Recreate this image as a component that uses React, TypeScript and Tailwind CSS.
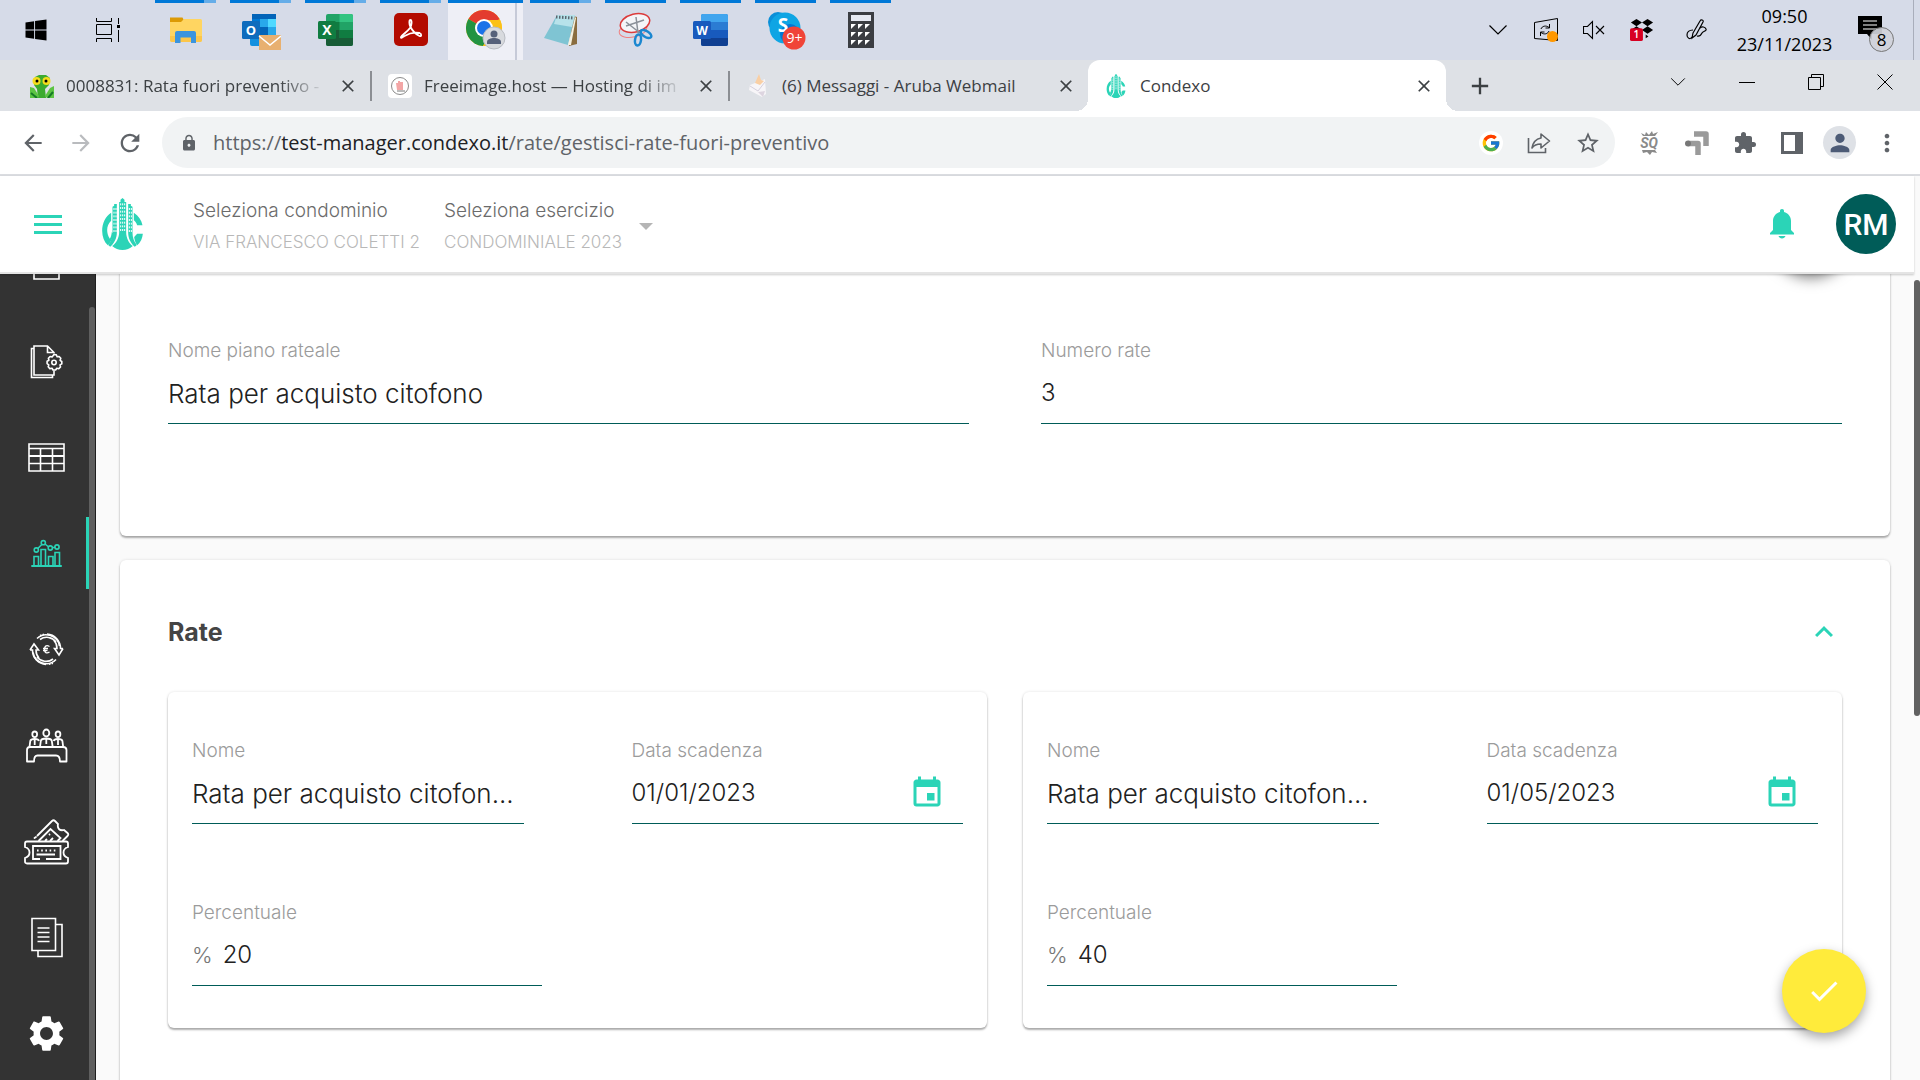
import React, { useId } from 'react'
import { FaWindows } from 'react-icons/fa'
import { FcGoogle } from 'react-icons/fc'
import {
  MdAdd,
  MdArrowBack,
  MdArrowForward,
  MdCheck,
  MdClose,
  MdEvent,
  MdExtension,
  MdKeyboardArrowUp,
  MdLock,
  MdMoreVert,
  MdPerson,
  MdRefresh,
  MdSettings,
  MdStarBorder,
} from 'react-icons/md'

interface Rata {
  nome: string
  scadenza: string
  percentuale: string
}

const RATE: Rata[] = [
  { nome: 'Rata per acquisto citofon...', scadenza: '01/01/2023', percentuale: '20' },
  { nome: 'Rata per acquisto citofon...', scadenza: '01/05/2023', percentuale: '40' },
]

/* ---------- Logo ---------- */

const CondexoLogo = ({ className }: { className?: string }) => (
  <svg viewBox="0 0 122 156" className={className} fill="#2bd4b7" aria-hidden="true">
    <path d="M27 44C10 55 0 75 0 98c0 18 6 33 17 44 8-8 14-20 18-34l-6-6c-1 9-3 16-6 20-6-8-8-18-8-26 0-10 4-21 12-28z" />
    <path d="M31 26l5-3v-5h8v86c0 16-8 32-20 42l-6-5c9-10 13-24 13-37z" />
    <path d="M51 12h4V5l6-5 6 5v7h5v90c0 18 8 34 20 42-9 8-19 12-31 12s-22-4-31-12c12-8 21-24 21-42z" />
    <path d="M78 18h8v5l5 3v78c0 13 4 27 13 37l-6 5c-12-10-20-26-20-42z" />
    <path d="M95 44c14 9 23 22 26 38h-16c-2-6-5-11-10-15z" />
    <path d="M105 107h17c-1 14-7 26-17 35-5-7-8-16-9-25z" />
    <g fill="#fff">
      {[30, 41, 52, 63, 74, 85, 96].map((y) => (
        <g key={y}>
          <rect x="34" y={y} width="3" height="6" />
          <rect x="40" y={y} width="3" height="6" />
          <rect x="80" y={y} width="3" height="6" />
          <rect x="86" y={y} width="3" height="6" />
        </g>
      ))}
      {[16, 27, 38, 49, 60, 71, 82, 93].map((y) => (
        <g key={y}>
          <rect x="54" y={y} width="3" height="6" />
          <rect x="60" y={y} width="3" height="6" />
          <rect x="66" y={y} width="3" height="6" />
        </g>
      ))}
    </g>
  </svg>
)

/* ---------- Taskbar icons ---------- */

const TaskViewIcon = () => (
  <svg viewBox="0 0 24 24" className="size-6" fill="none" stroke="#000" strokeWidth="1">
    <path d="M.5 0v3.500h15V0M.5 24v-3.500h15V24M.5 6.500h15v10H.5zM22.500 0v6M22.500 12v12" />
    <path d="M21 8.500h3" strokeWidth="3" />
  </svg>
)

const FolderIcon = () => (
  <svg viewBox="0 0 36 36" className="size-9">
    <path d="M2 5.500h12.500l1.500 3-2 4H2z" fill="#dc9a05" />
    <path d="M2 10h11l3-3h16.500a1.500 1.500 0 011.500 1.500V28a2 2 0 01-2 2H4a2 2 0 01-2-2z" fill="#ffd561" />
    <path d="M2 24h32v4a2 2 0 01-2 2H4a2 2 0 01-2-2z" fill="#fcc64a" />
    <path d="M7 31V21a2 2 0 012-2h17a2 2 0 012 2v10h-5v-5.500H12.500V31z" fill="#3b94de" />
  </svg>
)

const OutlookIcon = () => (
  <svg viewBox="0 0 40 40" className="size-10">
    <path d="M11 4h24v22H11z" fill="#28a8ea" />
    <path d="M11 4h24v5H11z" fill="#0364b8" />
    <path d="M11 9h8v8h-8z" fill="#0078d4" />
    <path d="M27 9h8v8h-8z" fill="#50d9ff" />
    <path d="M19 17h8v8h-8z" fill="#0364b8" />
    <path d="M9 24l10-3v15h-8a2 2 0 01-2-2z" fill="#1490df" />
    <rect x="1" y="11" width="18" height="18" rx="1.500" fill="#0f6cbd" />
    <text x="10" y="24.500" textAnchor="middle" fontSize="13" fontWeight="700" fontFamily="Open Sans, sans-serif" fill="#fff">O</text>
    <path d="M18 25h22v16H18z" fill="#e8b070" />
    <path d="M18 26l11 9 11-9" fill="none" stroke="#fff" strokeWidth="1.500" />
  </svg>
)

const ExcelIcon = () => (
  <svg viewBox="0 0 36 36" className="size-9">
    <rect x="8" y="2" width="27" height="32" rx="2" fill="#21a366" />
    <path d="M21.500 2H33a2 2 0 012 2v6H21.500z" fill="#33c481" />
    <path d="M8 10h13.500v8H8z" fill="#107c41" />
    <path d="M21.500 18H35v8H21.500z" fill="#107c41" />
    <path d="M8 18h13.500v8H35v6a2 2 0 01-2 2H10a2 2 0 01-2-2z" fill="#185c37" />
    <rect x="0" y="9" width="18" height="18" rx="1.500" fill="#107c41" />
    <text x="9" y="23" textAnchor="middle" fontSize="14" fontWeight="700" fontFamily="Open Sans, sans-serif" fill="#fff">X</text>
  </svg>
)

const AcrobatIcon = () => (
  <svg viewBox="0 0 36 36" className="size-9">
    <rect x="1" y="1" width="34" height="33" rx="5" fill="#b30b00" />
    <path
      d="M8 25c2-3 6-5 9-9 2-3 2-8 .500-8s-1.500 4 0 7c2 4 5 7 9 9 2 1 2.500-2 0-3-5-1-10 0-15 3-2 1-4 3-3.500 1z"
      fill="none"
      stroke="#fff"
      strokeWidth="1.800"
      strokeLinejoin="round"
    />
  </svg>
)

const ChromeIcon = () => (
  <svg viewBox="0 0 40 40" className="size-10">
    <circle cx="18" cy="18" r="18" fill="#fbc116" />
    <path d="M18 18L2.400 9A18 18 0 0133.600 9z" fill="#e33b2e" />
    <path d="M2.400 9A18 18 0 0017 36l8-13.500-7-4.500z" fill="#229342" />
    <path d="M34 10H18v8l7 4.500L17 36A18 18 0 0034 10z" fill="#fbc116" />
    <circle cx="18" cy="18" r="9" fill="#fff" />
    <circle cx="18" cy="18" r="7" fill="#1a73e8" />
    <circle cx="28" cy="28" r="11" fill="#d8dade" stroke="#b9bcc2" />
    <circle cx="28" cy="24" r="3.500" fill="#56617a" />
    <path d="M21 34v-2c0-3 4-4 7-4s7 1 7 4v2z" fill="#56617a" />
  </svg>
)

const NotepadIcon = () => (
  <svg viewBox="0 0 36 36" className="size-9">
    <path d="M30 4l4 1v27l-8 2z" fill="#8a6d3f" />
    <path d="M14 3h18l-7 30L1 26z" fill="#7fc4d3" />
    <path d="M14 3h18l-3 12-18-3z" fill="#b7e2ea" />
    <path d="M13 5l18 1" stroke="#5b6670" strokeWidth="3" strokeDasharray="1.500 1.500" />
    <path d="M25 33l7-28 1 1-5 27z" fill="#f4f1e0" />
  </svg>
)

const SnipIcon = () => (
  <svg viewBox="0 0 36 36" className="size-9" fill="none">
    <ellipse cx="15" cy="18" rx="14" ry="7" stroke="#f08080" transform="rotate(-12 15 18)" />
    <ellipse cx="17" cy="11" rx="15" ry="9" fill="#f4f5f8" stroke="#dc3b3b" strokeWidth="1.500" transform="rotate(-14 17 11)" />
    <path d="M8 10l14 11M18 5l2 16M8 14l18-6" stroke="#8b9199" strokeWidth="1.500" />
    <ellipse cx="20" cy="28" rx="3" ry="5.500" stroke="#1b87d0" strokeWidth="2.500" transform="rotate(8 20 28)" />
    <ellipse cx="28" cy="22" rx="3" ry="6" stroke="#1b87d0" strokeWidth="2.500" transform="rotate(-58 28 22)" />
  </svg>
)

const WordIcon = () => (
  <svg viewBox="0 0 36 36" className="size-9">
    <rect x="8" y="2" width="27" height="32" rx="2" fill="#2b7cd3" />
    <path d="M10 2h23a2 2 0 012 2v6H8V4a2 2 0 012-2z" fill="#41a5ee" />
    <path d="M8 18h27v8H8z" fill="#185abd" />
    <path d="M8 26h27v6a2 2 0 01-2 2H10a2 2 0 01-2-2z" fill="#103f91" />
    <rect x="0" y="9" width="18" height="18" rx="1.500" fill="#185abd" />
    <text x="9" y="22.500" textAnchor="middle" fontSize="12" fontWeight="700" fontFamily="Open Sans, sans-serif" fill="#fff">W</text>
  </svg>
)

const SkypeIcon = () => (
  <svg viewBox="0 0 40 40" className="size-10">
    <circle cx="12" cy="12" r="10" fill="#0a8fd8" />
    <circle cx="19" cy="18" r="15.500" fill="#0ea5e4" />
    <circle cx="24" cy="24" r="10" fill="#0078d4" />
    <text x="17" y="22" textAnchor="middle" fontSize="19" fontWeight="700" fontFamily="Open Sans, sans-serif" fill="#fff">S</text>
    <circle cx="28" cy="28" r="11.500" fill="#f04438" />
    <text x="28.500" y="33" textAnchor="middle" fontSize="14" fontFamily="Open Sans, sans-serif" fill="#fff">9+</text>
  </svg>
)

const CalculatorIcon = () => (
  <svg viewBox="0 0 26 36" className="h-9 w-[26px]">
    <path d="M0 0h26v36H0z" fill="#3b3d42" />
    <path d="M3 3h20v6H3z" fill="#e6e9f2" />
    {[12, 20, 28].map((y) =>
      [3, 10, 17].map((x) => <path key={`${x}-${y}`} d={`M${x} ${y}h5l-5 5z`} fill="#fff" />),
    )}
  </svg>
)

/* ---------- Tray icons ---------- */

const Chevron = ({ className }: { className?: string }) => (
  <svg viewBox="0 0 18 10" className={className} fill="none" stroke="#000" strokeWidth="1.200">
    <path d="M.5.5L9 9l8.500-8.500" />
  </svg>
)

const SyncIcon = () => (
  <svg viewBox="0 0 24 24" className="size-6" fill="none" stroke="#000">
    <path d="M.5 4.500L23.500.5v22L.5 20.500z" />
    <path d="M7 11c1-3 5-4 8-1.500M15.500 6v4h-4M15 13c-1 3-5 4-8 1.500M6.500 18v-4h4" />
    <circle cx="18.500" cy="18.500" r="5.500" fill="#ff9800" stroke="none" />
  </svg>
)

const MutedIcon = () => (
  <svg viewBox="0 0 22 20" className="h-5 w-[22px]" fill="none" stroke="#000" strokeWidth="1.100">
    <path d="M.5 6.500h4l5-5v17l-5-5h-4zM13 6l8 8M21 6l-8 8" />
  </svg>
)

const DropboxIcon = () => (
  <svg viewBox="0 0 26 24" className="h-6 w-[26px]">
    <path d="M7 0l6 4-6 4-6-4zM19 0l6 4-6 4-6-4zM19 8l6 4-6 4-6-4zM7 8l6 4-6 4-6-4zM17 17l3 2-3 2z" />
    <rect x="0" y="10" width="14" height="14" rx="2" fill="#d70022" />
    <text x="7" y="21" textAnchor="middle" fontSize="11" fontWeight="600" fontFamily="Open Sans, sans-serif" fill="#fff">1</text>
  </svg>
)

const PenIcon = () => (
  <svg viewBox="0 0 22 22" className="size-[22px]" fill="none" stroke="#000" strokeWidth="1.200">
    <path d="M7 14L14 2c1-2 4-1 3 1l-7 13-4 3z" />
    <path d="M7 11c-4 0-6 2-6 5s3 5 5 2M14 9c2-2 5-1 6 1s-3 2-4 4-2 4-5 3" />
  </svg>
)

const NotificationsIcon = () => (
  <svg viewBox="0 0 38 38" className="size-[38px]">
    <path d="M1 1h24v18H15v6l-5-6H1z" />
    <path d="M6 6h14M6 10h14M6 14h14" stroke="#fff" strokeWidth="1.200" />
    <circle cx="24.500" cy="24.500" r="12" fill="#d0d3da" fillOpacity=".92" stroke="#777" />
    <text x="24.500" y="30.500" textAnchor="middle" fontSize="17" fontFamily="Open Sans, sans-serif" fill="#000">8</text>
  </svg>
)

/* ---------- Browser icons ---------- */

const MantisIcon = () => (
  <svg viewBox="0 0 24 24" className="size-6">
    <path d="M5 3l4-2h7l4 3-1 7-4 4 1 9H8l-1-9-3-4z" fill="#3cab2f" />
    <path d="M0 13l4 1 5 8-1 2H0zM24 12l-4 2-5 8 2 2h7z" fill="#5cc443" />
    <path d="M1 19l6 5M23 18l-5 6" stroke="#167a26" strokeWidth="2" />
    <circle cx="6.500" cy="7" r="4" fill="#f4dc1c" />
    <circle cx="16.500" cy="7" r="4" fill="#f4dc1c" />
    <circle cx="7" cy="7" r="1.500" />
    <circle cx="16" cy="7" r="1.500" />
  </svg>
)

const FreeimageIcon = () => (
  <svg viewBox="0 0 24 24" className="size-6">
    <rect width="24" height="24" rx="4" fill="#fff" />
    <circle cx="12" cy="12" r="8.500" fill="none" stroke="#8b8b8b" />
    <path d="M8 9h2V7h2v1h3v8H9z" fill="#f3a6a6" />
    <path d="M9 17h8" stroke="#777" />
  </svg>
)

const ArubaIcon = () => (
  <svg viewBox="0 0 24 24" className="size-6">
    <path d="M4 11l15-6 1 15-4 3-13-7z" fill="#f7f5f8" />
    <path d="M4 12l8 5 7-9" fill="none" stroke="#d5d0dd" />
    <path d="M13 0l2 6 3 1-4 4-5-2z" fill="#f9cfa4" />
    <path d="M12 18l5 5 2-6z" fill="#ddd5e0" />
  </svg>
)

const ShareIcon = () => (
  <svg viewBox="0 0 24 24" className="size-6" fill="none" stroke="#5f6368" strokeWidth="1.600">
    <path d="M1.500 7v14.500h17V17" />
    <path d="M14 3l8.500 7-8.500 7v-4c-4 0-7 1-9 4 1-6 4-9 9-10z" strokeLinejoin="round" />
  </svg>
)

const SeoquakeIcon = () => (
  <svg viewBox="0 0 24 24" className="size-6" fill="#8a8a8a">
    <path d="M4 2l4 2 1-3 3 3 3-4 1 3 5-2-3 4H6zM5 19h13l2 3-5-1-2 3-3-3-4 1z" />
    <text x="12" y="17" textAnchor="middle" fontSize="14" fontWeight="700" fontStyle="italic" fontFamily="Roboto, sans-serif">SQ</text>
  </svg>
)

const ElbowsIcon = () => (
  <svg viewBox="0 0 24 24" className="size-6" fill="none" stroke="#9a9a9a" strokeWidth="5.500" strokeLinejoin="round">
    <path d="M9 3h12v12" />
    <path d="M3 12.500h10V24" />
    <circle cx="3" cy="12.500" r="3" fill="#777" stroke="none" />
  </svg>
)

const SidePanelIcon = () => (
  <svg viewBox="0 0 22 22" className="size-[22px]">
    <path d="M0 0h22v22H0z" fill="#5f6368" />
    <path d="M3 3h11v16H3z" fill="#fff" />
  </svg>
)

/* ---------- Sidebar icons ---------- */

const navSvg = {
  viewBox: '0 0 48 48',
  className: 'size-12',
  fill: 'none',
  stroke: 'currentColor',
  strokeWidth: 1.6,
  'aria-hidden': true,
} as const

const FrameIcon = () => (
  <svg {...navSvg}>
    <path d="M12 9h25v29H12z" />
  </svg>
)

const DocGearIcon = () => (
  <svg {...navSvg}>
    <path d="M32 16.500V15.500L25.500 9H12v29h20v-4.500M25.500 9v6.500H32" />
    <path d="M12 11.500H9.500v29h21V38" />
    <path
      d="M32 17.500l2.300.3.800 2 2-.3 1.700 1.800-.7 2 1.700 1.200v2.400l-1.800 1 .5 2-1.700 1.800-2-.5-1.200 1.800H31l-1-1.800-2.200.4-1.600-1.800.6-2-1.700-1.200v-2.400l1.800-1-.5-2 1.700-1.700 2 .4z"
      fill="#333"
      strokeLinejoin="round"
    />
    <circle cx="32" cy="25.500" r="2.200" />
  </svg>
)

const TableIcon = () => (
  <svg {...navSvg}>
    <path d="M7 11h35v27H7zM7 15.500h35M7 30.500h35M18.500 15.500V38M30.500 15.500V38" />
    <path d="M7 23h35" strokeWidth="2.200" />
  </svg>
)

const ChartIcon = () => (
  <svg {...navSvg}>
    <path d="M9.300 37h30.500" strokeWidth="2" />
    <path d="M12 37v-9.500h4.500V37M19 37V20.500h4.500V37M26.500 37v-9.500H31V37M33 37V23.500h4.500V37" />
    <path d="M15.800 19.500l4-4M23 15l3.700 3M30 18.700l3-.5" />
    <circle cx="14.300" cy="21" r="2.100" />
    <circle cx="21.300" cy="13.700" r="2.100" />
    <circle cx="28.300" cy="19" r="2.100" />
    <circle cx="35" cy="18" r="2.100" />
  </svg>
)

const EuroCycleIcon = () => (
  <svg {...navSvg}>
    <path d="M11 27.500a13.500 13.500 0 0023 7M37.500 21a13.500 13.500 0 00-22.500-7.500" />
    <path d="M15 32a11.500 11.500 0 0016 2M34 17a11.500 11.500 0 00-16-2.500" />
    <path d="M8 25l4-6 4.500 6H14c0 3 1 6 3 8M8 25h2.500c0 8 6 14 13.500 14.500" />
    <path d="M41 23.500l-4 6.500-4.500-6.500H35c0-3-1-6-3-8M41 23.500h-2.500c0-8-6-14-13.500-14.500" />
    <path d="M18 10.500l4-1.300M27 39.300l4-1" strokeDasharray="1.500 1.200" />
    <path d="M27.500 21.500c-3.500-2-5 0-5 3s2 4.500 5 2.500M21 23.500h5M21 25.500h4.500" strokeWidth="1.300" />
  </svg>
)

const MeetingIcon = () => (
  <svg {...navSvg} strokeWidth={1.8}>
    <path d="M5 40.500V29c0-2 1.500-3 3-3h33c2 0 3.500 1 3.500 3v11.500h-6.500c0-4-1.500-6-4-6H15.500c-2.500 0-3.500 2-3.500 6z" strokeLinejoin="round" />
    <ellipse cx="12.700" cy="13.300" rx="2.400" ry="2.800" />
    <ellipse cx="24.300" cy="12" rx="3" ry="3.500" />
    <ellipse cx="36" cy="13.300" rx="2.400" ry="2.800" />
    <path d="M7.500 26l.8-6c.3-1.500 2-2 4.400-2s4 .5 4.300 2M41.200 26l-.8-6c-.3-1.500-2-2-4.400-2s-4 .5-4.300 2" />
    <path d="M18 26l.8-6c.3-2 2.200-2.500 5.500-2.500s5.200.5 5.500 2.500l.9 6M24.300 18v5M12.700 19v5M36 19v5" />
  </svg>
)

const TicketsIcon = () => (
  <svg {...navSvg} strokeWidth={1.8}>
    <path d="M5 24.500h39c1.300 0 2 .7 2 2v3.500c-3 1-4.500 3-4.500 5.500s1.500 4.500 4.500 5.500v3.500c0 1.300-.7 2-2 2H5c-1.300 0-2-.7-2-2V41c3-1 4.500-3 4.500-5.500S6 31 3 30v-3.500c0-1.300.7-2 2-2z" />
    <path d="M18 42H11V29h27.500v13H24M14.500 37.500H33" />
    <path d="M15 33.500h19" strokeDasharray="1.600 2.600" />
    <path d="M15 19L30 4c1-1 2-1 3 0l3 3c-1 5 2 7 6 6l3.500 3c1 1 1 2 0 3l-5 5" />
    <path d="M16.500 24l12-12L38.500 21l-3 3M23 24l2-2M28 24l3-3M27 18l1-1" />
    <path d="M12.500 21l1.500-1" strokeLinecap="round" />
  </svg>
)

const DocumentsIcon = () => (
  <svg {...navSvg}>
    <path d="M10 5.500h23.500v32H10zM34 11.500h6v32H16V38" />
    <path d="M15.500 15h12M15.500 19.500h12M15.500 24h12M15.500 28.500h12" />
  </svg>
)

/* ---------- Layout ---------- */

const TASKS = [
  { name: 'Esplora file', icon: <FolderIcon />, stacked: true },
  { name: 'Outlook', icon: <OutlookIcon />, stacked: true },
  { name: 'Excel', icon: <ExcelIcon />, stacked: true },
  { name: 'Acrobat', icon: <AcrobatIcon />, stacked: true },
  { name: 'Chrome', icon: <ChromeIcon />, stacked: false, active: true },
  { name: 'Blocco note', icon: <NotepadIcon />, stacked: true },
  { name: 'Strumento di cattura', icon: <SnipIcon />, stacked: false },
  { name: 'Word', icon: <WordIcon />, stacked: false },
  { name: 'Skype', icon: <SkypeIcon />, stacked: false },
  { name: 'Calcolatrice', icon: <CalculatorIcon />, stacked: false },
]

const TRAY = [
  { name: 'Mostra icone nascoste', icon: <Chevron className="h-[10px] w-[18px]" /> },
  { name: 'Sincronizzazione', icon: <SyncIcon /> },
  { name: 'Volume disattivato', icon: <MutedIcon /> },
  { name: 'Dropbox', icon: <DropboxIcon /> },
]

const Taskbar: React.FC = () => (
  <div className="flex h-[60px] shrink-0 items-stretch bg-[#d6dbe8]">
    <button aria-label="Start" className="flex w-[72px] items-center justify-center">
      <FaWindows className="size-6" />
    </button>
    <button aria-label="Visualizzazione attività" className="mr-1 flex w-[72px] items-center justify-center">
      <TaskViewIcon />
    </button>
    {TASKS.map((task) => (
      <button
        key={task.name}
        aria-label={task.name}
        className={`relative flex w-[75px] flex-col items-center ${task.active ? 'bg-[#eeeff6]' : ''}`}
      >
        <span className={`flex h-[3px] bg-[#0078d7] ${task.active ? 'w-full' : 'w-[61px]'}`}>
          {task.stacked && <span className="ml-auto h-full w-3 bg-[#66ade8]" />}
        </span>
        <span className="flex flex-1 items-center pb-[3px]">{task.icon}</span>
        {task.active && <span className="absolute top-[3px] right-[6px] bottom-0 w-[2px] bg-[#c6cad8]" />}
      </button>
    ))}
    <div className="ml-auto flex items-center">
      <div className="flex items-center gap-6">
        {TRAY.map((item) => (
          <button key={item.name} aria-label={item.name} className="flex w-6 justify-center">
            {item.icon}
          </button>
        ))}
        <button aria-label="Penna" className="ml-2">
          <PenIcon />
        </button>
      </div>
      <div className="ml-6 w-[105px] text-center text-[18px] leading-7 text-black">
        <p>09:50</p>
        <p>23/11/2023</p>
      </div>
      <button aria-label="Notifiche" className="mr-[18px] ml-5 pt-2">
        <NotificationsIcon />
      </button>
      <span className="mr-[6px] h-full w-px bg-[#a9aebb]" />
    </div>
  </div>
)

const TABS = [
  { title: '0008831: Rata fuori preventivo -', icon: <MantisIcon /> },
  { title: 'Freeimage.host — Hosting di im', icon: <FreeimageIcon /> },
  { title: '(6) Messaggi - Aruba Webmail', icon: <ArubaIcon /> },
  { title: 'Condexo', icon: <CondexoLogo className="h-6 w-6" />, active: true },
]

const ACTIVE_TAB =
  "relative rounded-t-xl bg-white before:absolute before:bottom-0 before:-left-3 before:size-3 before:bg-[radial-gradient(circle_at_0_0,transparent_12px,white_12px)] before:content-[''] after:absolute after:-right-3 after:bottom-0 after:size-3 after:bg-[radial-gradient(circle_at_100%_0,transparent_12px,white_12px)] after:content-['']"

const TabStrip: React.FC = () => (
  <div className="flex h-[51px] shrink-0 items-stretch bg-[#dee1e6] pl-[14px] text-[#3c4043]">
    {TABS.map((tab, i) => (
      <div key={tab.title} className={`flex w-[358px] items-center pr-3 pl-4 ${tab.active ? ACTIVE_TAB : ''}`}>
        {tab.icon}
        <span
          className={`ml-3 w-[260px] text-[17px] whitespace-nowrap ${i < 2 ? '[mask-image:linear-gradient(to_right,#000_82%,transparent)]' : ''}`}
        >
          {tab.title}
        </span>
        <button aria-label={`Chiudi ${tab.title}`} className="ml-auto">
          <MdClose className="size-5" />
        </button>
        {i < 2 && <span className="-mr-3 ml-3 h-[30px] w-[2px] bg-[#8b8e93]" />}
      </div>
    ))}
    <button aria-label="Nuova scheda" className="ml-5 self-center">
      <MdAdd className="size-7" />
    </button>
    <div className="ml-auto flex items-start gap-[53px] pt-[14px] pr-[27px] text-black">
      <button aria-label="Cerca schede" className="flex h-4 items-center">
        <Chevron className="h-2 w-4" />
      </button>
      <button aria-label="Riduci a icona" className="flex h-4 items-center">
        <span className="h-px w-4 bg-black" />
      </button>
      <button aria-label="Ripristina">
        <svg viewBox="0 0 16 16" className="size-4" fill="none" stroke="#000">
          <path d="M.5 3.500h12v12H.5zM3.500 3V.5h12v12H13" />
        </svg>
      </button>
      <button aria-label="Chiudi">
        <svg viewBox="0 0 16 16" className="size-4" fill="none" stroke="#000">
          <path d="M.5.5l15 15M15.500.5l-15 15" />
        </svg>
      </button>
    </div>
  </div>
)

const Toolbar: React.FC = () => (
  <div className="flex h-[65px] shrink-0 items-center border-b-2 border-[#dadce0] bg-white pr-[19px] pl-5 text-[#5f6368]">
    <div className="flex gap-[22px]">
      <button aria-label="Indietro">
        <MdArrowBack className="size-[26px]" />
      </button>
      <button aria-label="Avanti" className="text-[#b9bbbe]">
        <MdArrowForward className="size-[26px]" />
      </button>
      <button aria-label="Ricarica">
        <MdRefresh className="size-7" />
      </button>
    </div>
    <div className="ml-[18px] flex h-[51px] flex-1 items-center rounded-full bg-[#f1f3f4] pr-[14px] pl-[18px]">
      <MdLock className="size-[18px]" />
      <div role="textbox" aria-label="Barra degli indirizzi" tabIndex={0} className="ml-[15px] flex-1 text-[20px]">
        https://<span className="text-[#202124]">test-manager.condexo.it</span>/rate/gestisci-rate-fuori-preventivo
      </div>
      <div className="flex items-center gap-6">
        <span className="rounded-full bg-white p-[2px]">
          <FcGoogle className="size-5" />
        </span>
        <button aria-label="Condividi">
          <ShareIcon />
        </button>
        <button aria-label="Preferiti">
          <MdStarBorder className="size-[26px]" />
        </button>
      </div>
    </div>
    <div className="ml-[22px] flex items-center gap-6">
      <button aria-label="SEOquake">
        <SeoquakeIcon />
      </button>
      <button aria-label="Estensione">
        <ElbowsIcon />
      </button>
      <button aria-label="Estensioni">
        <MdExtension className="size-6" />
      </button>
      <button aria-label="Pannello laterale">
        <SidePanelIcon />
      </button>
      <button
        aria-label="Profilo"
        className="-mr-[7px] -ml-1 flex size-[33px] items-center justify-center rounded-full bg-[#dee1e6] text-[#4d5b76]"
      >
        <MdPerson className="size-7" />
      </button>
      <button aria-label="Menu">
        <MdMoreVert className="size-7" />
      </button>
    </div>
  </div>
)

const HeaderSelect = ({ label, value }: { label: string; value: string }) => {
  const id = useId()
  return (
    <div className="flex flex-col">
      <label htmlFor={id} className="text-[19px] leading-8 font-light text-[#6b6b6b]">
        {label}
      </label>
      <select id={id} className="appearance-none bg-transparent text-[17px] leading-[30px] font-light text-[#b8b8b8]">
        <option>{value}</option>
      </select>
    </div>
  )
}

const AppHeader: React.FC = () => (
  <header className="relative z-10 -mb-[2px] flex h-[98px] shrink-0 items-center border-b-2 border-[#e4e4e4] bg-white pr-[18px] pl-[34px] shadow-[0_1px_2px_rgba(0,0,0,0.2)]">
    <button aria-label="Apri menu" className="flex w-7 flex-col gap-[5px]">
      <span className="h-[3px] bg-[#2bd4b7]" />
      <span className="h-[3px] bg-[#2bd4b7]" />
      <span className="h-[3px] bg-[#2bd4b7]" />
    </button>
    <CondexoLogo className="ml-10 h-[52px] w-[41px]" />
    <div className="ml-[50px] flex items-center gap-6 pt-1">
      <HeaderSelect label="Seleziona condominio" value="VIA FRANCESCO COLETTI 2" />
      <HeaderSelect label="Seleziona esercizio" value="CONDOMINIALE 2023" />
      <svg viewBox="0 0 14 7" className="-ml-2 h-[7px] w-[14px]" fill="#b5b5b5" aria-hidden="true">
        <path d="M0 0h14L7 7z" />
      </svg>
    </div>
    <button aria-label="Notifiche" className="ml-auto">
      <svg viewBox="0 0 24 30" className="h-[30px] w-6" fill="#2bd4b7">
        <path d="M12 0c1.300 0 2 .9 2 2v1c4 1 7 4.500 7 9v9l3 3v1.500H0V24l3-3v-9c0-4.500 3-8 7-9V2c0-1.100.7-2 2-2zM8.500 27h7c-.6 1.600-1.800 2.500-3.500 2.500S9.100 28.600 8.500 27z" />
      </svg>
    </button>
    <button
      aria-label="Account"
      className="ml-[42px] flex size-[60px] items-center justify-center rounded-full bg-[#005c58] text-[30px] font-medium text-white [font-family:Roboto,sans-serif]"
    >
      RM
    </button>
  </header>
)

const NAV = [
  { name: 'Anagrafiche', icon: <FrameIcon /> },
  { name: 'Configurazione documenti', icon: <DocGearIcon /> },
  { name: 'Tabelle', icon: <TableIcon /> },
  { name: 'Preventivi', icon: <ChartIcon />, active: true },
  { name: 'Movimenti', icon: <EuroCycleIcon /> },
  { name: 'Assemblee', icon: <MeetingIcon /> },
  { name: 'Ticket', icon: <TicketsIcon /> },
  { name: 'Documenti', icon: <DocumentsIcon /> },
  { name: 'Impostazioni', icon: <MdSettings className="size-[43px]" /> },
]

const Sidebar: React.FC = () => (
  <aside className="flex w-24 shrink-0 overflow-hidden border-r border-[#1f1f1f] bg-[#333]">
    {/* scrolled a little way down, so the first entry is cut by the header */}
    <nav className="-mt-[55px] flex-1 pl-[3px]">
      {NAV.map((item) => (
        <a
          key={item.name}
          href="#"
          aria-label={item.name}
          className={`relative flex h-24 items-center justify-center ${item.active ? 'text-[#2bd4b7]' : 'text-white'}`}
        >
          {item.icon}
          {item.active && <span className="absolute inset-y-3 right-0 w-[3px] bg-[#2bd4b7]" />}
        </a>
      ))}
    </nav>
    <div className="mt-[35px] w-[6px] rounded-t-full bg-[#5f5f5f]" />
  </aside>
)

interface FieldProps {
  label: string
  value: string
  prefix?: string
  numeric?: boolean
  action?: React.ReactNode
  className?: string
}

const Field: React.FC<FieldProps> = ({ label, value, prefix, numeric, action, className = '' }) => {
  const id = useId()
  return (
    <div className={className}>
      <label htmlFor={id} className="block text-[19px] leading-6 font-light text-[#9b9b9b]">
        {label}
      </label>
      <div className="flex h-[61px] items-center border-b border-[#005c58]">
        {prefix && <span className="mr-[10px] text-[22px] font-light text-[#777]">{prefix}</span>}
        <input
          id={id}
          defaultValue={value}
          className={`w-full min-w-0 flex-1 bg-transparent font-light text-[#212121] outline-none ${numeric ? 'text-[24px]' : 'text-[26px]'}`}
        />
        {action}
      </div>
    </div>
  )
}

const CARD = 'rounded-md bg-white shadow-[0_2px_2px_rgba(0,0,0,0.3),0_0_3px_rgba(0,0,0,0.12)]'

const RataCard = ({ rata }: { rata: Rata }) => (
  <section className={`${CARD} px-6 pt-[47px] pb-[42px]`}>
    <div className="grid grid-cols-2 gap-x-[108px]">
      <Field label="Nome" value={rata.nome} />
      <Field
        label="Data scadenza"
        value={rata.scadenza}
        numeric
        action={
          <button aria-label="Scegli data" className="mr-[18px] text-[#2bd4b7]">
            <MdEvent className="size-[36px]" />
          </button>
        }
      />
    </div>
    <Field label="Percentuale" value={rata.percentuale} prefix="%" numeric className="mt-[77px] w-[350px]" />
  </section>
)

const App: React.FC = () => {
  return (
    <div className="flex h-screen flex-col overflow-hidden bg-[#fafafa] [font-family:'Open_Sans','Noto_Sans',sans-serif]">
      <Taskbar />
      <TabStrip />
      <Toolbar />
      <div className="flex min-h-0 flex-1 [font-family:Inter,sans-serif]">
        <div className="flex min-w-0 flex-1 flex-col">
          <AppHeader />
          <div className="flex min-h-0 flex-1">
            <Sidebar />
            <main className="relative min-w-0 flex-1 overflow-hidden pr-6 pl-6">
              <section className={`${CARD} grid grid-cols-2 gap-x-[72px] rounded-t-none px-12 pt-[67px] pb-28`}>
                <Field label="Nome piano rateale" value="Rata per acquisto citofono" />
                <Field label="Numero rate" value="3" numeric />
              </section>
              <section className={`${CARD} mt-6 px-12 pt-12 pb-24`}>
                <div className="flex items-center justify-between">
                  <h2 className="text-[25px] leading-12 font-bold text-[#444]">Rate</h2>
                  <button aria-label="Comprimi" className="text-[#2bd4b7]">
                    <MdKeyboardArrowUp className="size-9" />
                  </button>
                </div>
                <div className="mt-9 grid grid-cols-2 gap-x-9">
                  {RATE.map((rata) => (
                    <RataCard key={rata.scadenza} rata={rata} />
                  ))}
                </div>
              </section>
              {/* floating button scrolled out under the header, only its shadow is left */}
              <span className="absolute -top-[84px] right-[61px] size-[84px] rounded-full shadow-[0_6px_14px_rgba(0,0,0,0.5)]" />
              <button
                aria-label="Salva"
                className="absolute right-12 bottom-[47px] flex size-[84px] items-center justify-center rounded-full bg-[#ffeb3b] text-white shadow-[0_5px_12px_rgba(0,0,0,0.35)]"
              >
                <MdCheck className="size-9" />
              </button>
            </main>
          </div>
        </div>
        <div className="w-[6px] shrink-0 bg-[#fafafa] pt-[104px]">
          <div className="h-[436px] rounded-full bg-[#616161]" />
        </div>
      </div>
    </div>
  )
}

export default App
